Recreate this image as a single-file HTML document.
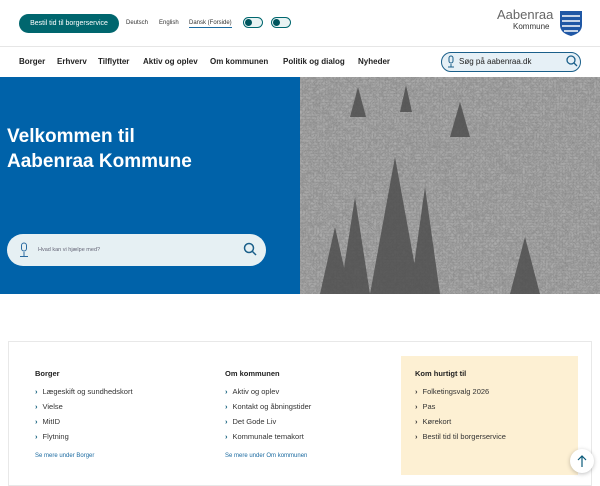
<!DOCTYPE html>
<html><head><meta charset="utf-8"><style>
*{margin:0;padding:0;box-sizing:border-box}
body{width:600px;height:480px;overflow:hidden;font-family:"Liberation Sans",sans-serif;background:#fff;position:relative;color:#1a1a1a}
.a{position:absolute}
.btn{left:19px;top:14px;width:100px;height:19px;border-radius:10px;background:#00666e;color:#fff;font-size:7px;line-height:19px;text-align:center}
.lang{top:20px;font-size:6px;color:#333}
.tog{top:17px;width:20px;height:11px;border-radius:6px;border:1px solid #00666e;background:#e8f3f3}
.tog i{position:absolute;left:1px;top:1px;width:7px;height:7px;border-radius:50%;background:#00565e}
.nav{top:57px;font-size:8px;font-weight:bold;color:#222}
.hero{left:0;top:77px;width:300px;height:217px;background:#0062a9}
.img{left:300px;top:77px;width:300px;height:217px;background:#9c9c9c}
h1{position:absolute;left:7px;top:124px;color:#fff;font-size:19px;line-height:25px;font-weight:bold}
.search{left:7px;top:234px;width:259px;height:32px;border-radius:16px;background:#e6f0f3}
.box{left:8px;top:341px;width:584px;height:145px;border:1px solid #e8e8e8}
.yel{left:401px;top:356px;width:177px;height:119px;background:#fdf0d3}
.h{font-size:7.5px;font-weight:bold;color:#222}
.li{font-size:7.5px;color:#333}
.li b{color:#0a5a7a;margin-right:5px}
.more{font-size:6px;color:#1a6aa0}
</style></head><body>
<div class="a btn">Bestil tid til borgerservice</div>
<div class="a lang" style="left:126px">Deutsch</div>
<div class="a lang" style="left:159px">English</div>
<div class="a lang" style="left:189px;border-bottom:1px solid #1a6aa0;padding-bottom:1px">Dansk (Forside)</div>
<div class="a tog" style="left:243px"><i></i></div>
<div class="a tog" style="left:271px"><i></i></div>
<div class="a" style="left:497px;top:7px;font-size:13px;color:#666">Aabenraa</div>
<div class="a" style="left:513px;top:22px;font-size:8px;color:#333">Kommune</div>
<svg class="a" style="left:559px;top:10px" width="24" height="27" viewBox="0 0 24 27"><path d="M1 1H23V15Q23 23 12 26Q1 23 1 15Z" fill="#1f57a5"/><path d="M3 6H21M3 11H21M3 16H21M5 21H19" stroke="#fff" stroke-width="1.6"/></svg>
<div class="a" style="left:0;top:46px;width:600px;height:1px;background:#e6e6e6"></div>
<div class="a nav" style="left:19px">Borger</div>
<div class="a nav" style="left:57px">Erhverv</div>
<div class="a nav" style="left:98px">Tilflytter</div>
<div class="a nav" style="left:143px">Aktiv og oplev</div>
<div class="a nav" style="left:210px">Om kommunen</div>
<div class="a nav" style="left:283px">Politik og dialog</div>
<div class="a nav" style="left:358px">Nyheder</div>
<div class="a" style="left:441px;top:52px;width:140px;height:20px;border-radius:10px;border:1.5px solid #1a5f8a;background:#e6f0f6"></div>
<div class="a" style="left:459px;top:57px;font-size:8px;color:#222">Søg på aabenraa.dk</div>
<svg class="a" style="left:447px;top:55px" width="8" height="13"><rect x="2" y="1" width="4" height="7" rx="2" fill="none" stroke="#1a5f8a"/><path d="M4 9V12M1 12H7" stroke="#1a5f8a"/></svg>
<svg class="a" style="left:566px;top:55px" width="12" height="12"><circle cx="5" cy="5" r="4" fill="none" stroke="#1a5f8a" stroke-width="1.3"/><path d="M8 8L11 11" stroke="#1a5f8a" stroke-width="1.3"/></svg>
<div class="a hero"></div>
<svg class="a img" width="300" height="217" viewBox="0 0 300 217">
<defs><filter id="n"><feTurbulence baseFrequency="0.35" numOctaves="2" seed="3"/><feColorMatrix type="saturate" values="0"/><feComponentTransfer><feFuncA type="linear" slope="0" intercept="0.45"/></feComponentTransfer></filter></defs>
<rect width="300" height="217" fill="#a8a8a8"/>
<rect width="300" height="217" filter="url(#n)"/>
<rect width="300" height="217" fill="#8a8a8a" opacity="0.35"/>
<g fill="#3a3a3a" opacity="0.85">
<path d="M40 217L55 120L70 217Z"/><path d="M70 217L95 80L120 217Z"/><path d="M20 217L35 150L50 217Z"/>
<path d="M110 217L125 110L140 217Z"/><path d="M50 40L58 10L66 40Z"/><path d="M100 35L106 8L112 35Z"/><path d="M150 60L160 25L170 60Z"/><path d="M210 217L225 160L240 217Z"/>
</g>
<rect width="300" height="217" fill="#ccc" opacity="0.15"/>
</svg>
<h1>Velkommen til<br>Aabenraa Kommune</h1>
<div class="a search"></div>
<svg class="a" style="left:19px;top:242px" width="10" height="16"><rect x="2.5" y="1" width="5" height="8" rx="2.5" fill="none" stroke="#2a6aa0"/><path d="M5 10V14M1 14.5H9" stroke="#2a6aa0"/></svg>
<div class="a" style="left:38px;top:247px;font-size:5.5px;color:#667">Hvad kan vi hjælpe med?</div>
<svg class="a" style="left:243px;top:242px" width="14" height="14"><circle cx="6" cy="6" r="4.5" fill="none" stroke="#1a5f8a" stroke-width="1.5"/><path d="M9.5 9.5L13 13" stroke="#1a5f8a" stroke-width="1.5"/></svg>
<div class="a box"></div>
<div class="a yel"></div>
<div class="a h" style="left:35px;top:369px">Borger</div>
<div class="a li" style="left:35px;top:387px"><b>›</b>Lægeskift og sundhedskort</div>
<div class="a li" style="left:35px;top:402px"><b>›</b>Vielse</div>
<div class="a li" style="left:35px;top:417px"><b>›</b>MitID</div>
<div class="a li" style="left:35px;top:432px"><b>›</b>Flytning</div>
<div class="a more" style="left:35px;top:453px">Se mere under Borger</div>
<div class="a h" style="left:225px;top:369px">Om kommunen</div>
<div class="a li" style="left:225px;top:387px"><b>›</b>Aktiv og oplev</div>
<div class="a li" style="left:225px;top:402px"><b>›</b>Kontakt og åbningstider</div>
<div class="a li" style="left:225px;top:417px"><b>›</b>Det Gode Liv</div>
<div class="a li" style="left:225px;top:432px"><b>›</b>Kommunale temakort</div>
<div class="a more" style="left:225px;top:453px">Se mere under Om kommunen</div>
<div class="a h" style="left:415px;top:369px">Kom hurtigt til</div>
<div class="a li" style="left:415px;top:387px"><b style="color:#333">›</b>Folketingsvalg 2026</div>
<div class="a li" style="left:415px;top:402px"><b style="color:#333">›</b>Pas</div>
<div class="a li" style="left:415px;top:417px"><b style="color:#333">›</b>Kørekort</div>
<div class="a li" style="left:415px;top:432px"><b style="color:#333">›</b>Bestil tid til borgerservice</div>
<div class="a" style="left:570px;top:449px;width:24px;height:24px;border-radius:50%;background:#fff;box-shadow:0 1px 4px rgba(0,0,0,.25)"></div>
<svg class="a" style="left:576px;top:454px" width="12" height="14"><path d="M6 13V2M2 6L6 2L10 6" fill="none" stroke="#0a5a7a" stroke-width="1.2"/></svg>
</body></html>
